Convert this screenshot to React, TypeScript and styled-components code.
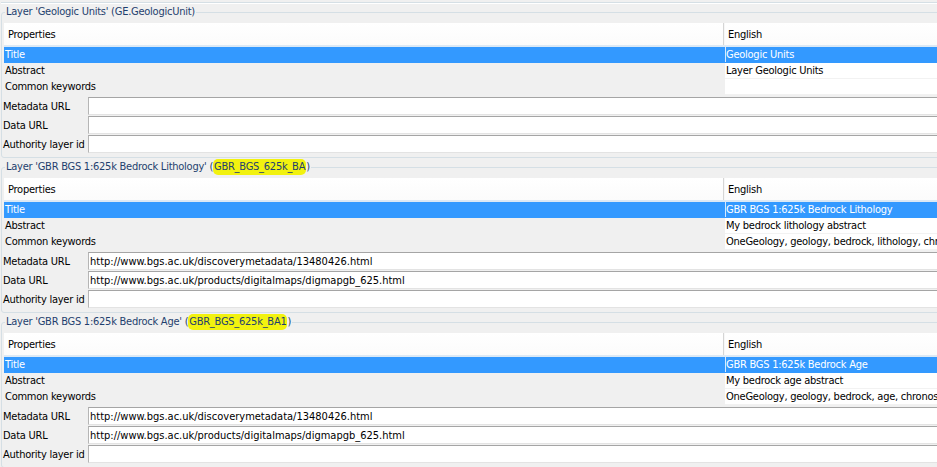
import React from 'react';
import styled, { createGlobalStyle } from 'styled-components';

const GlobalStyle = createGlobalStyle`
  html, body {
    margin: 0;
    padding: 0;
    background: #f0f0f0;
    overflow: hidden;
  }
  body {
    font-family: "DejaVu Sans Condensed", "Liberation Sans", sans-serif;
    font-size: 11px;
    letter-spacing: -0.25px;
    color: #000;
  }
`;

const Page = styled.div`
  width: 937px;
  height: 467px;
  overflow: hidden;
  background: #f0f0f0;
`;

// bottom edge of the group box above, scrolled out of view
const PrevEdge = styled.div`
  height: 2px;
  margin-left: 1px;
  width: 1000px;
  border-bottom: 1px solid #d5dfe5;
  box-shadow: 0 1px 0 #fff;
`;

const Group = styled.fieldset`
  margin: 1px 0 1px 1px;
  padding: 3px 0 3px 2px;
  width: 1000px;
  min-width: 0;
  box-sizing: border-box;
  border: 1px solid #d5dfe5;
  border-radius: 3px;
`;

const Legend = styled.legend`
  margin-left: 1px;
  padding: 0 1px;
  line-height: 16px;
  color: #1f3f6e;
  white-space: nowrap;
`;

const Mark = styled.span`
  display: inline-block;
  padding: 0 1px;
  background: #f2f20f;
  border-radius: 5px;
  line-height: 16px;
`;

const Table = styled.div`
  margin-bottom: 2px;
`;

const HeaderRow = styled.div`
  display: flex;
  height: 22px;
  background: linear-gradient(#ffffff, #fbfbfb);
  border-bottom: 2px solid #dce9f5;
`;

const HeaderCell = styled.div<{ $w?: number }>`
  flex: ${p => (p.$w ? `0 0 ${p.$w}px` : '1')};
  padding: 2px 0 0 4px;
  line-height: 20px;
  box-sizing: border-box;
  border-right: ${p => (p.$w ? '1px solid #d5d5d5' : 'none')};
  box-shadow: ${p => (p.$w ? '1px 0 0 #f7f7f7' : 'none')};
`;

const Row = styled.div<{ $sel?: boolean }>`
  display: flex;
  height: 16px;
  line-height: 16px;
  background: ${p => (p.$sel ? '#3399ff' : 'transparent')};
  color: ${p => (p.$sel ? '#fff' : '#000')};
  white-space: nowrap;
`;

const NameCell = styled.div`
  flex: 0 0 721px;
  padding-left: 1px;
  box-sizing: border-box;
`;

const ValueCell = styled.div<{ $sel?: boolean }>`
  flex: 1;
  padding-left: 1px;
  overflow: hidden;
  box-sizing: border-box;
  background: ${p => (p.$sel ? '#3399ff' : '#fff')};
  border-bottom: 1px solid ${p => (p.$sel ? '#3399ff' : '#f2f2f2')};
  line-height: 15px;
  box-shadow: ${p => (p.$sel ? 'inset 1px 0 0 #d6e9ff' : 'none')};
`;

const FieldRow = styled.div`
  display: flex;
  align-items: center;
  height: 18px;
  margin-bottom: 1px;
  white-space: nowrap;
`;

const FieldLabel = styled.span`
  flex: 0 0 85px;
  margin-left: -1px;
`;

const FieldInput = styled.input`
  flex: 1;
  height: 18px;
  box-sizing: border-box;
  margin: 0;
  padding: 0 0 0 1px;
  font: inherit;
  letter-spacing: 0;
  color: #000;
  background: #fff;
  border: 1px solid;
  border-color: #a5a5a5 #dcdcdc #e3e3e3 #b5b5b5;
  border-radius: 0;
  outline: none;
`;

interface Layer {
  title: string;
  id: string;
  marked: boolean;
  abstract: string;
  keywords: string;
  metadataUrl: string;
  dataUrl: string;
}

const layers: Layer[] = [
  {
    title: 'Geologic Units',
    id: 'GE.GeologicUnit',
    marked: false,
    abstract: 'Layer Geologic Units',
    keywords: '',
    metadataUrl: '',
    dataUrl: '',
  },
  {
    title: 'GBR BGS 1:625k Bedrock Lithology',
    id: 'GBR_BGS_625k_BA',
    marked: true,
    abstract: 'My bedrock lithology abstract',
    keywords: 'OneGeology, geology, bedrock, lithology, chronostratigraphy',
    metadataUrl: 'http://www.bgs.ac.uk/discoverymetadata/13480426.html',
    dataUrl: 'http://www.bgs.ac.uk/products/digitalmaps/digmapgb_625.html',
  },
  {
    title: 'GBR BGS 1:625k Bedrock Age',
    id: 'GBR_BGS_625k_BA1',
    marked: true,
    abstract: 'My bedrock age abstract',
    keywords: 'OneGeology, geology, bedrock, age, chronostratigraphy',
    metadataUrl: 'http://www.bgs.ac.uk/discoverymetadata/13480426.html',
    dataUrl: 'http://www.bgs.ac.uk/products/digitalmaps/digmapgb_625.html',
  },
];

const LayerBox: React.FC<{ layer: Layer }> = ({ layer }) => (
  <Group>
    <Legend>
      Layer '{layer.title}' ({layer.marked ? <Mark>{layer.id}</Mark> : layer.id})
    </Legend>
    <Table>
      <HeaderRow>
        <HeaderCell $w={720}>Properties</HeaderCell>
        <HeaderCell>English</HeaderCell>
      </HeaderRow>
      <Row $sel>
        <NameCell>Title</NameCell>
        <ValueCell $sel>{layer.title}</ValueCell>
      </Row>
      <Row>
        <NameCell>Abstract</NameCell>
        <ValueCell>{layer.abstract}</ValueCell>
      </Row>
      <Row>
        <NameCell>Common keywords</NameCell>
        <ValueCell>{layer.keywords}</ValueCell>
      </Row>
    </Table>
    <FieldRow>
      <FieldLabel>Metadata URL</FieldLabel>
      <FieldInput readOnly value={layer.metadataUrl} />
    </FieldRow>
    <FieldRow>
      <FieldLabel>Data URL</FieldLabel>
      <FieldInput readOnly value={layer.dataUrl} />
    </FieldRow>
    <FieldRow>
      <FieldLabel>Authority layer id</FieldLabel>
      <FieldInput readOnly value="" />
    </FieldRow>
  </Group>
);

const App: React.FC = () => (
  <Page>
    <GlobalStyle />
    <PrevEdge />
    {layers.map(l => (
      <LayerBox key={l.id} layer={l} />
    ))}
  </Page>
);

export default App;
